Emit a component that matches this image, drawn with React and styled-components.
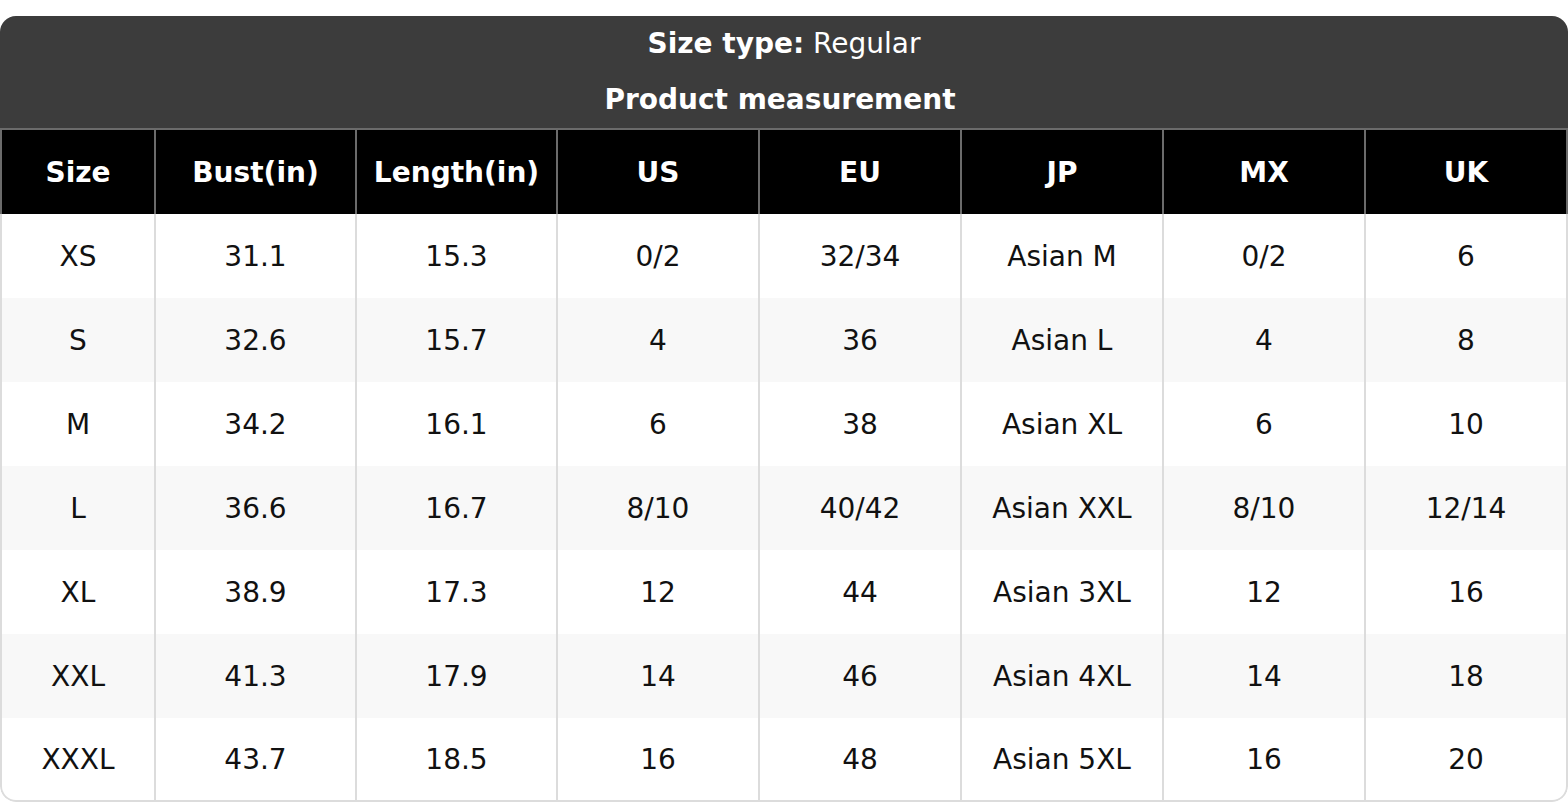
import styled, { createGlobalStyle } from "styled-components";

const GlobalStyle = createGlobalStyle`
  body {
    margin: 0;
    background: #fff;
    font-family: "DejaVu Sans", "Liberation Sans", sans-serif;
  }
`;

const columns = ["Size", "Bust(in)", "Length(in)", "US", "EU", "JP", "MX", "UK"];

const rows = [
  ["XS", "31.1", "15.3", "0/2", "32/34", "Asian M", "0/2", "6"],
  ["S", "32.6", "15.7", "4", "36", "Asian L", "4", "8"],
  ["M", "34.2", "16.1", "6", "38", "Asian XL", "6", "10"],
  ["L", "36.6", "16.7", "8/10", "40/42", "Asian XXL", "8/10", "12/14"],
  ["XL", "38.9", "17.3", "12", "44", "Asian 3XL", "12", "16"],
  ["XXL", "41.3", "17.9", "14", "46", "Asian 4XL", "14", "18"],
  ["XXXL", "43.7", "18.5", "16", "48", "Asian 5XL", "16", "20"],
];

// card holding the whole chart
const Card = styled.div`
  margin-top: 16px;
  border-radius: 16px;
  overflow: hidden;
  background: #fff;
`;

const TitleBar = styled.div`
  background: #3c3c3c;
  color: #fff;
  text-align: center;
  font-size: 28px;
`;

const TitleLine = styled.div`
  height: 56px;
  line-height: 55px;
  font-weight: ${({ $bold }) => ($bold ? 700 : 400)};
  padding-right: ${({ $bold }) => ($bold ? "8px" : "0")};
`;

const Grid = styled.div`
  display: grid;
  grid-template-columns: 155px 201px 201px 202px 202px 202px 202px 1fr;
`;

const HeadCell = styled.div`
  height: 86px;
  display: flex;
  align-items: center;
  justify-content: center;
  background: #000;
  color: #fff;
  font-size: 28px;
  font-weight: 700;
  box-sizing: border-box;
  border-top: 2px solid #6b6b6b;
  border-left: ${({ $first }) => ($first ? "2px" : "1px")} solid #6b6b6b;
  border-right: ${({ $last }) => ($last ? "2px" : "1px")} solid #6b6b6b;
`;

const Cell = styled.div`
  height: 84px;
  display: flex;
  align-items: center;
  justify-content: center;
  background: ${({ $alt }) => ($alt ? "#f8f8f8" : "#fff")};
  color: #111;
  font-size: 28px;
  box-sizing: border-box;
  border-left: ${({ $first }) => ($first ? "2px" : "1px")} solid #dcdcdc;
  border-right: ${({ $last }) => ($last ? "2px" : "1px")} solid #dcdcdc;
  border-bottom: ${({ $bottom }) => ($bottom ? "2px solid #dcdcdc" : "none")};
  border-bottom-left-radius: ${({ $first, $bottom }) => ($first && $bottom ? "16px" : "0")};
  border-bottom-right-radius: ${({ $last, $bottom }) => ($last && $bottom ? "16px" : "0")};
`;

function App() {
  return (
    <>
      <GlobalStyle />
      <Card>
        <TitleBar>
          <TitleLine>
            <b>Size type:</b> Regular
          </TitleLine>
          <TitleLine $bold>Product measurement</TitleLine>
        </TitleBar>
        <Grid>
          {columns.map((c, i) => (
            <HeadCell key={c} $first={i === 0} $last={i === columns.length - 1}>
              {c}
            </HeadCell>
          ))}
          {rows.map((row, r) =>
            row.map((v, i) => (
              <Cell
                key={r + "-" + i}
                $alt={r % 2 === 1}
                $first={i === 0}
                $last={i === row.length - 1}
                $bottom={r === rows.length - 1}
              >
                {v}
              </Cell>
            ))
          )}
        </Grid>
      </Card>
    </>
  );
}

export default App;
